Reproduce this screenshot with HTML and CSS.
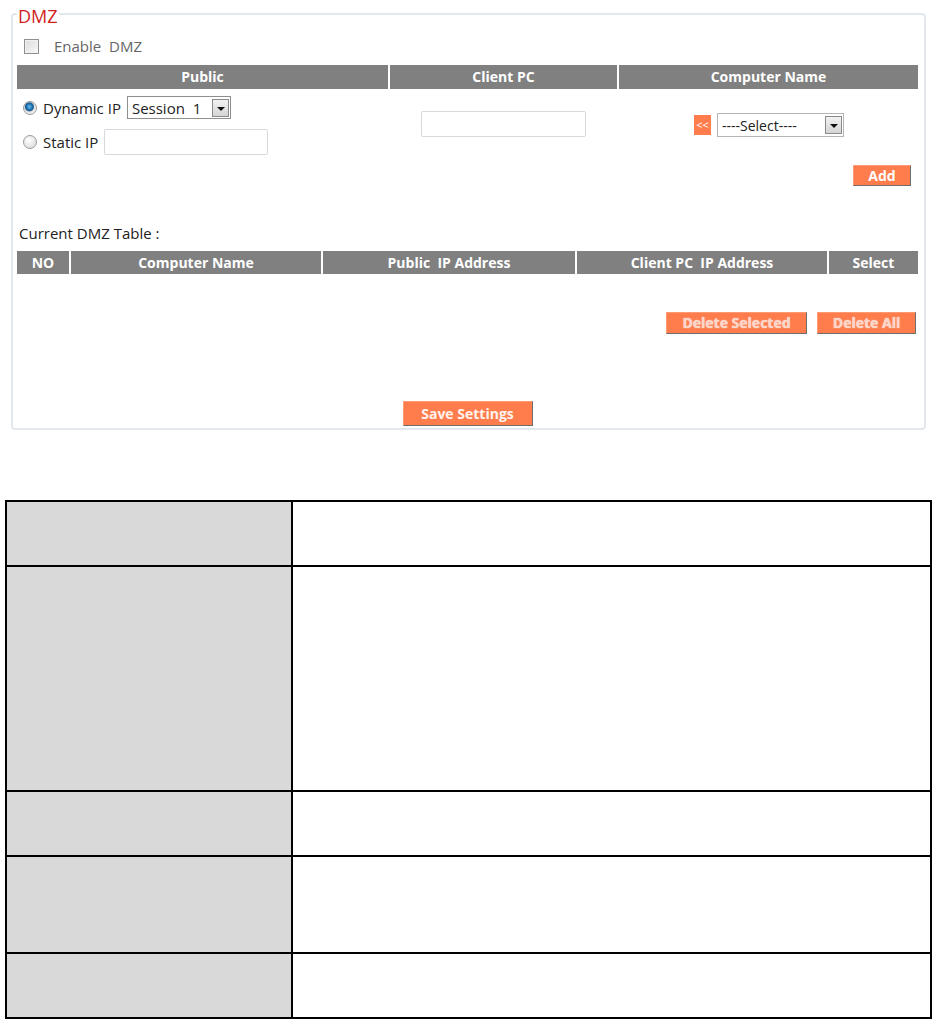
FILE: index.html
```html
<!DOCTYPE html>
<html lang="en">
<head>
  <meta charset="UTF-8" />
  <title>DMZ</title>
  <link rel="stylesheet" href="styles.css">
</head>
<body>
  <!-- DMZ settings panel -->
  <fieldset class="dmz">
    <legend>DMZ</legend>

    <div class="enable-row">
      <span class="checkbox"></span>
      <span class="enable-label">Enable&nbsp; DMZ</span>
    </div>

    <div class="rule-grid">
      <div class="head">Public</div>
      <div class="head">Client PC</div>
      <div class="head">Computer Name</div>

      <div class="public-cell">
        <div class="ip-row">
          <span class="radio checked"></span>
          <span>Dynamic IP</span>
          <div class="select session">
            <span class="select-text">Session&nbsp; 1</span>
            <span class="select-arrow"></span>
          </div>
        </div>
        <div class="ip-row">
          <span class="radio"></span>
          <span>Static IP</span>
          <span class="textbox static"></span>
        </div>
      </div>

      <div class="client-cell">
        <span class="textbox client"></span>
      </div>

      <div class="name-cell">
        <button class="btn copy">&lt;&lt;</button>
        <div class="select names">
          <span class="select-text">----Select----</span>
          <span class="select-arrow"></span>
        </div>
      </div>
    </div>

    <div class="add-row">
      <button class="btn add">Add</button>
    </div>

    <p class="table-title">Current DMZ Table :</p>

    <div class="dmz-table">
      <div class="head">NO</div>
      <div class="head">Computer Name</div>
      <div class="head">Public&nbsp; IP Address</div>
      <div class="head">Client PC&nbsp; IP Address</div>
      <div class="head">Select</div>
    </div>

    <div class="delete-row">
      <button class="btn faded del-sel">Delete Selected</button>
      <button class="btn faded del-all">Delete All</button>
    </div>

    <div class="save-row">
      <button class="btn save">Save Settings</button>
    </div>
  </fieldset>

  <!-- Description table -->
  <table class="desc">
    <tr class="r1"><td class="key"></td><td></td></tr>
    <tr class="r2"><td class="key"></td><td></td></tr>
    <tr class="r3"><td class="key"></td><td></td></tr>
    <tr class="r4"><td class="key"></td><td></td></tr>
    <tr class="r5"><td class="key"></td><td></td></tr>
  </table>
</body>
</html>
```

FILE: styles.css
```css
* {
  box-sizing: border-box;
}

body {
  margin: 0;
  background: #fff;
  font-family: "Open Sans", "Liberation Sans", sans-serif;
  font-size: 14px;
  color: #222;
}

/* panel */
.dmz {
  margin: 0 10px 0 11px;
  padding: 0 6px 4px 4px;
  border: 2px solid #e2e8ee;
  border-radius: 4px;
  width: 915px;
  height: 430px;
}

.dmz legend {
  padding: 4px 1px 0;
  font-size: 18px;
  line-height: 24px;
  color: #d01f1f;
}

.enable-row {
  display: flex;
  align-items: center;
  height: 28px;
  margin-top: 4px;
  padding-left: 7px;
}

.checkbox {
  width: 15px;
  height: 15px;
  border: 1px solid #8e8f8f;
  background: linear-gradient(135deg, #dcdcdc, #f8f8f8);
  box-shadow: inset 0 0 0 1px #f2f2f2;
}

.enable-label {
  margin-left: 15px;
  color: #666;
  font-size: 15px;
}

/* add rule grid */
.rule-grid {
  display: grid;
  grid-template-columns: 371px 227px 299px;
  column-gap: 2px;
  margin-top: 5px;
}

.head {
  background: #808080;
  color: #fff;
  font-weight: bold;
  font-size: 14px;
  text-align: center;
  height: 24px;
  line-height: 24px;
}

.public-cell {
  padding: 7px 0 0 6px;
}

.ip-row {
  display: flex;
  align-items: center;
  gap: 6px;
  height: 23px;
  margin-bottom: 10px;
  font-size: 15px;
}

.ip-row + .ip-row {
  height: 26px;
}

.radio {
  width: 14px;
  height: 14px;
  border-radius: 50%;
  border: 1px solid #9a9a9a;
  background: radial-gradient(circle at 40% 35%, #fff, #d4d4d4);
  margin-right: 0;
}

.radio.checked {
  background: radial-gradient(circle at 45% 40%, #6fc1f2 0, #1b6fae 3px, #1b5d8e 4px, #ddd 5px, #f4f4f4 7px);
}

.select {
  display: flex;
  align-items: center;
  justify-content: space-between;
  height: 23px;
  border: 1px solid #8f8f8f;
  background: #fff;
  padding: 0 1px 0 4px;
}

.select.session {
  width: 104px;
}

.select.names {
  width: 127px;
  height: 24px;
  border-color: #b5b5b5;
}

.select-text {
  white-space: nowrap;
}

.select-arrow {
  position: relative;
  width: 17px;
  height: 18px;
  border: 1px solid #8a8a8a;
  background: linear-gradient(#f2f2f2, #d5d5d5);
}

.select-arrow::after {
  content: "";
  position: absolute;
  left: 4px;
  top: 7px;
  border-left: 4px solid transparent;
  border-right: 4px solid transparent;
  border-top: 4px solid #111;
}

.textbox {
  display: block;
  height: 26px;
  border: 1px solid #d6d9dd;
  border-radius: 2px;
  background: #fff;
}

.textbox.static {
  width: 164px;
}

.client-cell {
  display: flex;
  justify-content: center;
  padding-top: 22px;
}

.textbox.client {
  width: 165px;
}

.name-cell {
  display: flex;
  align-items: center;
  padding: 24px 0 0 75px;
  gap: 6px;
  align-self: start;
}

/* buttons */
.btn {
  font-family: "Open Sans", "Liberation Sans", sans-serif;
  background: #ff7d4d;
  color: #fff;
  font-weight: bold;
  font-size: 14px;
  border: 1px solid #ff9a73;
  border-right-color: #6e6e6e;
  border-bottom-color: #6e6e6e;
  padding: 0;
  height: 21px;
  line-height: 18px;
}

.btn.copy {
  width: 17px;
  height: 20px;
  font-size: 11px;
  font-weight: normal;
  border-color: #ff7d4d;
}

.add-row {
  display: flex;
  justify-content: flex-end;
  margin-top: 0;
  padding-right: 7px;
}

.btn.add {
  width: 58px;
}

.table-title {
  margin: 37px 0 0 2px;
  font-size: 15px;
  line-height: 20px;
  color: #222;
}

.dmz-table {
  display: grid;
  grid-template-columns: 52px 250px 252px 250px 89px;
  column-gap: 2px;
  margin-top: 8px;
}

.dmz-table .head {
  height: 23px;
  line-height: 23px;
}

.delete-row {
  display: flex;
  justify-content: flex-end;
  gap: 10px;
  margin-top: 38px;
  padding-right: 2px;
}

.btn.faded {
  color: #fbd5c7;
  text-shadow: 0 0 1px #fff;
  height: 22px;
}

.btn.del-sel {
  width: 141px;
}

.btn.del-all {
  width: 99px;
}

.save-row {
  display: flex;
  justify-content: center;
  margin-top: 67px;
  padding-left: 0;
}

.btn.save {
  width: 130px;
  height: 25px;
  line-height: 22px;
  color: #fff2ec;
}

/* description table */
.desc {
  border-collapse: collapse;
  margin: 70px 0 0 5px;
  width: 927px;
}

.desc td {
  border: 2px solid #000;
  padding: 0;
}

.desc .key {
  width: 286px;
  background: #d9d9d9;
}

.r1, .r3, .r5 {
  height: 65px;
}

.r2 {
  height: 225px;
}

.r4 {
  height: 97px;
}
```
